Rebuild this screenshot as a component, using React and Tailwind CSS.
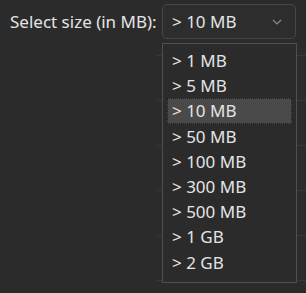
import React from 'react';

const sizes = ['> 1 MB', '> 5 MB', '> 10 MB', '> 50 MB', '> 100 MB', '> 300 MB', '> 500 MB', '> 1 GB', '> 2 GB'];

export default function App() {
    const selected = '> 10 MB';

    return (
        <div className="relative w-[306px] h-[293px] overflow-hidden bg-[#2b2b2b] text-[#e4e4e4] font-['Noto_Sans',sans-serif]">
            {/* faint row lines of whatever sits under the popup */}
            <div className="absolute left-[157px] right-0 top-[55px] flex flex-col gap-[44px]">
                {[0, 1, 2, 3, 4, 5].map((i) => (
                    <div key={i} className="h-px bg-[#383838]" />
                ))}
            </div>

            <div className="relative flex items-center pl-[10px] pt-[4px]">
                <span className="w-[152px] text-[17px] leading-none">Select size (in MB):</span>
                <div className="flex items-center justify-between w-[134px] h-[35px] pl-[9px] pr-[13px] rounded-[5px] border border-[#474747] bg-[#2d2d2d]">
                    <span className="text-[17px] leading-none">{selected}</span>
                    <svg width="10" height="6" viewBox="0 0 10 6" fill="none">
                        <path d="M1 1l4 4 4-4" stroke="#8a8a8a" strokeWidth="1.2" />
                    </svg>
                </div>
            </div>

            <div className="absolute left-[162px] top-[43px] w-[135px] h-[240px] border border-[#4f4f4f] bg-[#2b2b2b] pt-[4px] px-[4px]">
                {sizes.map((s) => (
                    <div
                        key={s}
                        className={`flex items-center h-[25.2px] pl-[5px] text-[17px] leading-none ${s === selected ? 'bg-[#4a4a4a] outline outline-1 outline-dotted outline-[#1a1a1a] -outline-offset-1' : ''}`}
                    >
                        {s}
                    </div>
                ))}
            </div>
        </div>
    );
}
